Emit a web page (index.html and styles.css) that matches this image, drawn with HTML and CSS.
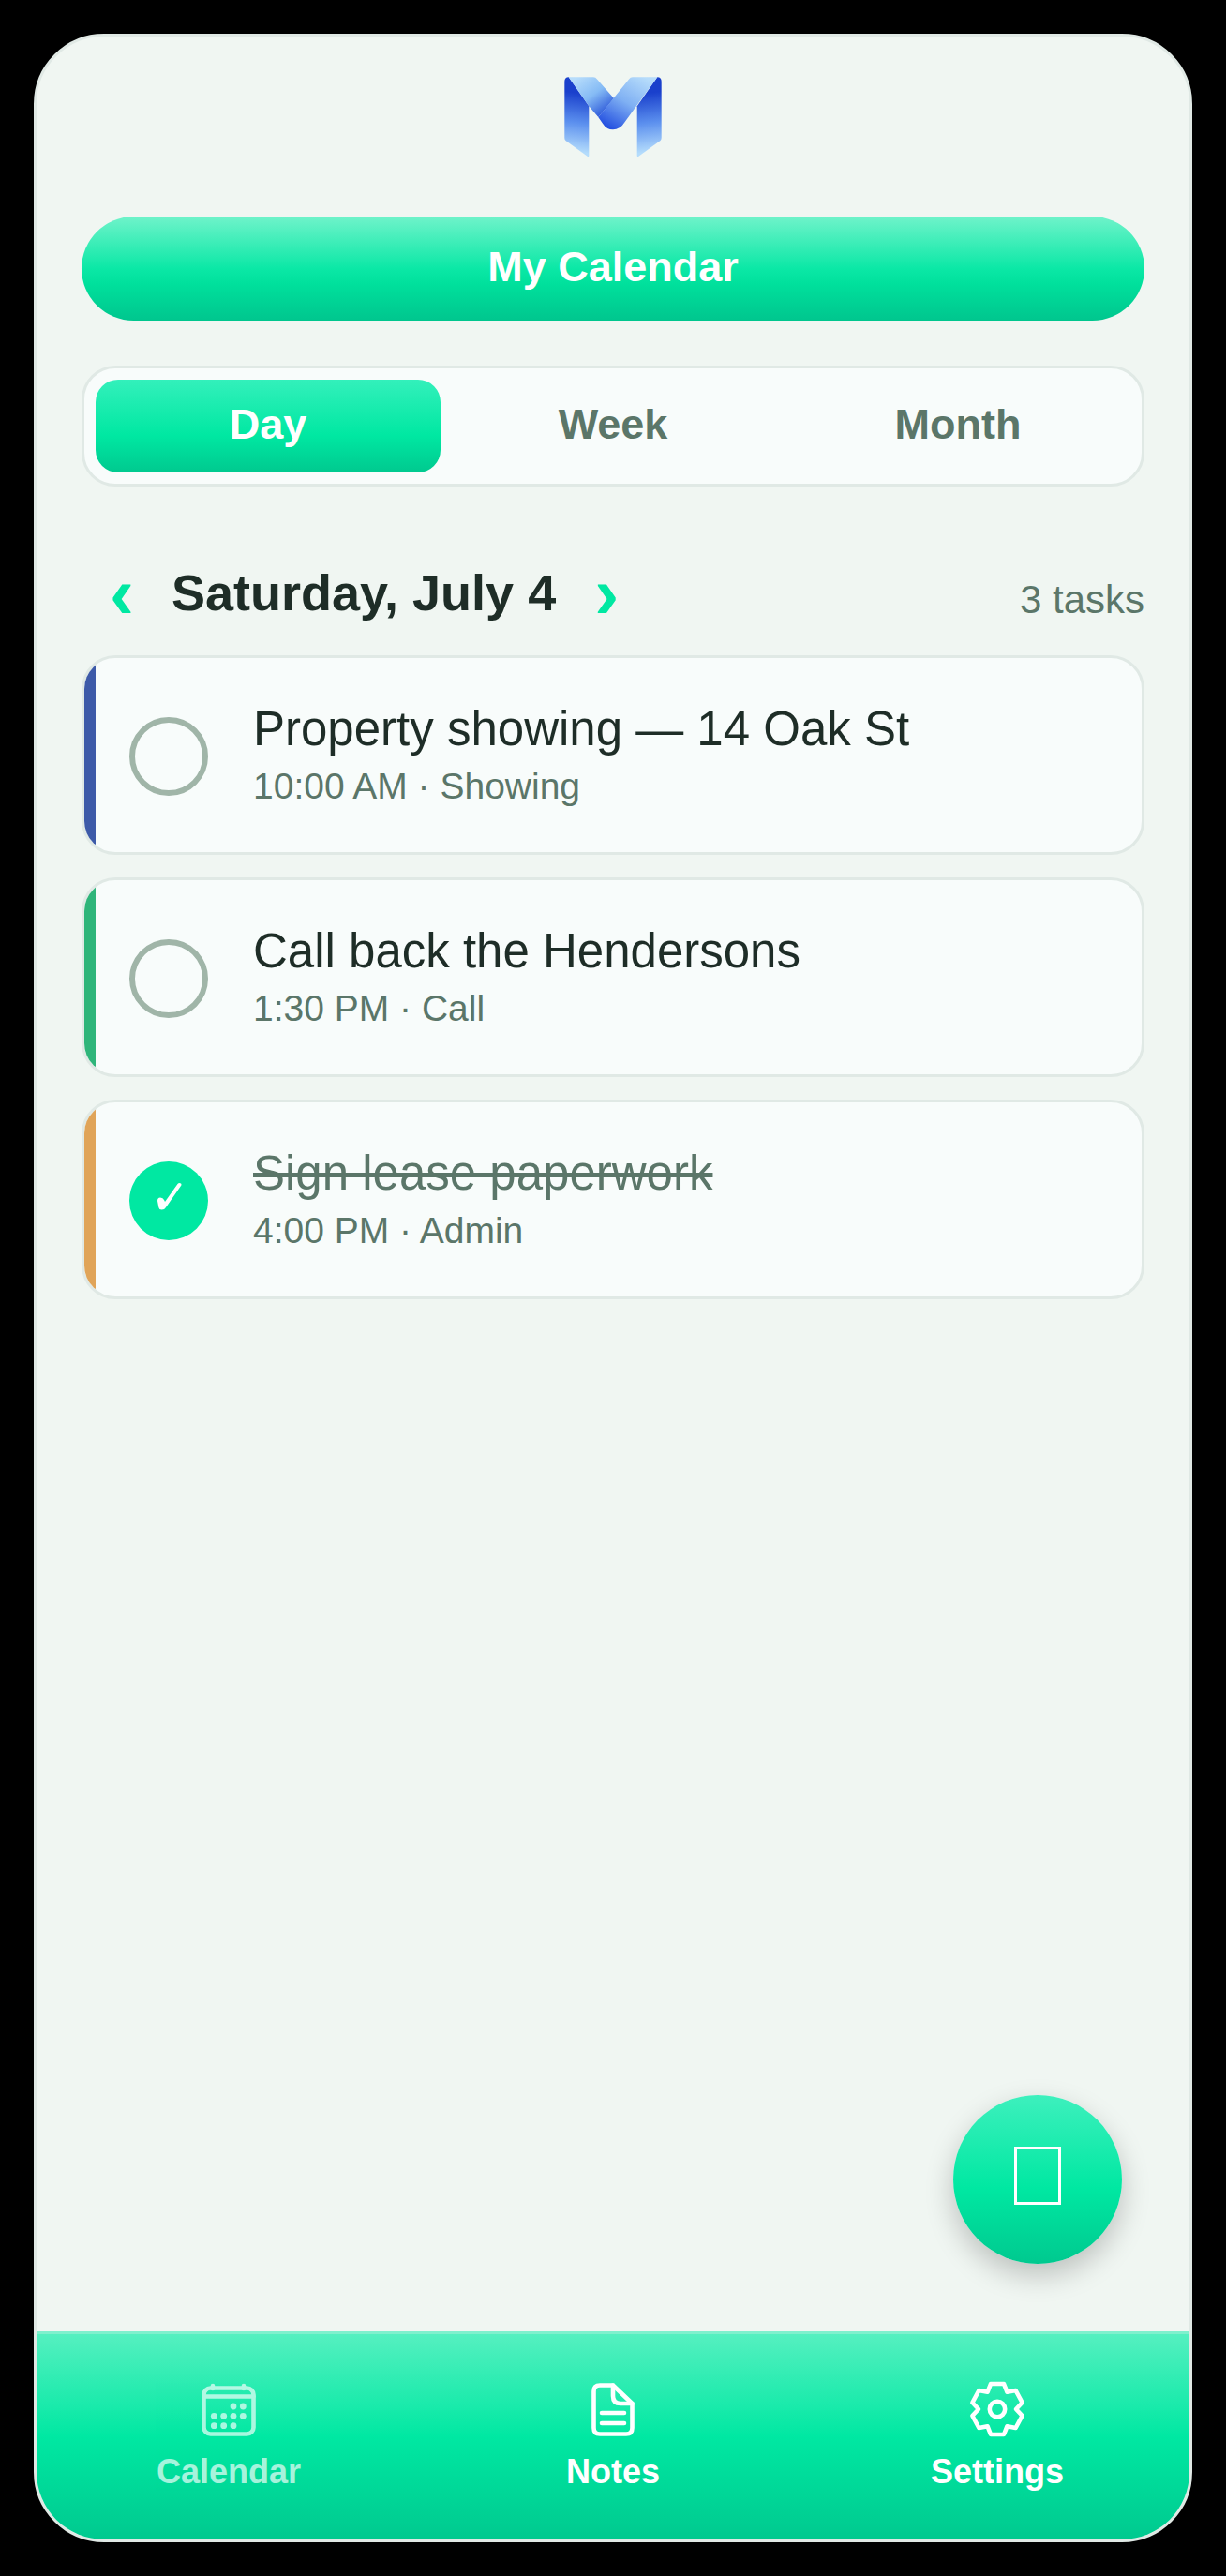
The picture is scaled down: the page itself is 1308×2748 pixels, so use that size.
FILE: index.html
```html
<!DOCTYPE html>
<html lang="en">
<head>
    <meta charset="UTF-8">
    <meta name="viewport" content="width=device-width, initial-scale=1.0">
    <title>My Calendar</title>
    <link rel="stylesheet" href="styles.css">
</head>
<body>
    <div class="phone">
        <main class="content">
            <!-- Logo -->
            <div class="logo-row">
                <svg class="logo" viewBox="0 0 104 86">
                    <defs>
                        <linearGradient id="sideGrad" gradientUnits="userSpaceOnUse" x1="20" y1="18" x2="12" y2="80">
                            <stop offset="0" stop-color="#1a40cc"/>
                            <stop offset="0.5" stop-color="#5b8fee"/>
                            <stop offset="1" stop-color="#b4dcfc"/>
                        </linearGradient>
                        <linearGradient id="sideGradR" gradientUnits="userSpaceOnUse" x1="84" y1="18" x2="92" y2="80">
                            <stop offset="0" stop-color="#1a40cc"/>
                            <stop offset="0.5" stop-color="#5b8fee"/>
                            <stop offset="1" stop-color="#b4dcfc"/>
                        </linearGradient>
                        <linearGradient id="backGrad" gradientUnits="userSpaceOnUse" x1="15" y1="0" x2="44" y2="40">
                            <stop offset="0" stop-color="#b6dcfb"/>
                            <stop offset="0.5" stop-color="#85bbf5"/>
                            <stop offset="1" stop-color="#2a55d8"/>
                        </linearGradient>
                        <linearGradient id="frontGrad" gradientUnits="userSpaceOnUse" x1="85" y1="0" x2="50" y2="56">
                            <stop offset="0" stop-color="#b6dcfb"/>
                            <stop offset="0.5" stop-color="#7fb0f3"/>
                            <stop offset="1" stop-color="#2450e0"/>
                        </linearGradient>
                    </defs>
                    <path fill="url(#sideGrad)" d="M0.3 5 Q0.3 0.3 4.7 0.3 L26.3 31.3 V84 Q26.3 85.6 25 85 L1.5 68 Q0.3 67 0.3 65 Z"/>
                    <path fill="url(#sideGradR)" d="M103.7 5 Q103.7 0.3 99.3 0.3 L77.7 31.3 V84 Q77.7 85.6 79 85 L102.5 68 Q103.7 67 103.7 65 Z"/>
                    <path fill="url(#backGrad)" d="M4.7 0.3 H31 Q33.5 0.3 35 2.5 L53 23 L36.3 43 L26.3 31.3 Z"/>
                    <path fill="url(#frontGrad)" d="M73 0.3 H99.3 L64 49 Q59.5 56.3 52 56.3 Q45 56.3 41 49.7 L36.3 43 L69 2.5 Q70.5 0.3 73 0.3 Z"/>
                </svg>
            </div>

            <!-- Titel -->
            <div class="title-bar">My Calendar</div>

            <!-- Ansicht -->
            <div class="segment">
                <div class="segment-item active">Day</div>
                <div class="segment-item">Week</div>
                <div class="segment-item">Month</div>
            </div>

            <!-- Datum -->
            <div class="date-row">
                <div class="date-nav">
                    <span class="chevron">‹</span>
                    <h2 class="date-label">Saturday, July 4</h2>
                    <span class="chevron">›</span>
                </div>
                <span class="task-count">3 tasks</span>
            </div>

            <!-- Aufgaben -->
            <div class="task-list">
                <div class="task-card">
                    <div class="task-accent accent-blue"></div>
                    <div class="task-check"></div>
                    <div class="task-text">
                        <div class="task-title">Property showing — 14 Oak St</div>
                        <div class="task-meta">10:00 AM · Showing</div>
                    </div>
                </div>
                <div class="task-card">
                    <div class="task-accent accent-green"></div>
                    <div class="task-check"></div>
                    <div class="task-text">
                        <div class="task-title">Call back the Hendersons</div>
                        <div class="task-meta">1:30 PM · Call</div>
                    </div>
                </div>
                <div class="task-card">
                    <div class="task-accent accent-orange"></div>
                    <div class="task-check done">
                        <svg class="check-mark" viewBox="0 0 84 84">
                            <path d="M51.5 24 Q53 22.5 55 23.5 Q56 24.5 55 26 L39 49 Q37.5 51.5 34.5 51.5 Q31.8 51.5 31.3 49 L30 42 Q30 38.5 33 38.5 Q36 38.5 37 41 L38 43 Z"/>
                        </svg>
                    </div>
                    <div class="task-text">
                        <div class="task-title striked">Sign lease paperwork</div>
                        <div class="task-meta">4:00 PM · Admin</div>
                    </div>
                </div>
            </div>

            <!-- Neu -->
            <button type="button" class="fab"><span class="fab-box"></span></button>
        </main>

        <!-- Navigation -->
        <nav class="bottom-nav">
            <div class="nav-item dim">
                <svg class="nav-icon" viewBox="0 0 64 64">
                    <rect x="5.5" y="9.5" width="53" height="49" rx="7"/>
                    <path d="M5.5 18.5 H58.5 M15 7 V10 M48 7 V10"/>
                    <g class="dots">
                        <circle cx="37" cy="29" r="3.4"/><circle cx="47.3" cy="29" r="3.4"/>
                        <circle cx="16.3" cy="39.3" r="3.4"/><circle cx="26.7" cy="39.3" r="3.4"/><circle cx="37" cy="39.3" r="3.4"/><circle cx="47.3" cy="39.3" r="3.4"/>
                        <circle cx="16.3" cy="49.7" r="3.4"/><circle cx="26.7" cy="49.7" r="3.4"/><circle cx="37" cy="49.7" r="3.4"/>
                    </g>
                </svg>
                <span class="nav-label">Calendar</span>
            </div>
            <div class="nav-item">
                <svg class="nav-icon" viewBox="0 0 64 64">
                    <path d="M18 6.5 H32 L52.5 26 V52 Q52.5 58.5 46 58.5 H18 Q11.5 58.5 11.5 52 V13 Q11.5 6.5 18 6.5 Z"/>
                    <path d="M32 6.5 V18 Q32 26 40 26 H52.5"/>
                    <path d="M20 36 H44 M20 47 H44"/>
                </svg>
                <span class="nav-label">Notes</span>
            </div>
            <div class="nav-item">
                <svg class="nav-icon" viewBox="0 0 64 64">
                    <path d="M25 5 H39 L42.5 13.8 L51.6 12 L58.6 25 L52 32 L58.6 39 L51.6 52 L42.5 50.2 L39 59 H25 L21.5 50.2 L12.4 52 L5.4 39 L12 32 L5.4 25 L12.4 12 L21.5 13.8 Z"/>
                    <circle cx="32" cy="32" r="8.2"/>
                </svg>
                <span class="nav-label">Settings</span>
            </div>
        </nav>
    </div>
</body>
</html>
```

FILE: styles.css
```css
* {
    margin: 0;
    padding: 0;
    box-sizing: border-box;
}

body {
    font-family: "Liberation Sans", Arial, sans-serif;
    background-color: #000;
    padding: 36px;
    width: 1308px;
    height: 2748px;
    overflow: hidden;
}

.phone {
    width: 1236px;
    height: 2676px;
    display: flex;
    flex-direction: column;
    background-color: #f0f6f2;
    border: 3px solid #e0e9e5;
    border-radius: 75px;
    overflow: hidden;
}

.content {
    position: relative;
    flex: 1;
    padding: 43px 48px 0;
}

.logo-row {
    display: flex;
    justify-content: center;
    height: 86px;
}

.logo {
    width: 104px;
    height: 86px;
}

.title-bar {
    margin-top: 63px;
    height: 111px;
    padding-bottom: 3px;
    border-radius: 56px;
    background: linear-gradient(180deg, #6ff3ca 0%, #0be8a6 50%, #00e09c 65%, #00c68e 100%);
    color: white;
    font-size: 45px;
    font-weight: bold;
    display: flex;
    align-items: center;
    justify-content: center;
}

.segment {
    margin-top: 48px;
    display: grid;
    grid-template-columns: repeat(3, 1fr);
    padding: 12px;
    background-color: #f8fcfb;
    border: 3px solid #e0e9e5;
    border-radius: 36px;
}

.segment-item {
    height: 99px;
    padding-bottom: 3px;
    display: flex;
    align-items: center;
    justify-content: center;
    font-size: 45px;
    font-weight: bold;
    color: #5b7669;
    border-radius: 24px;
}

.segment-item.active {
    color: white;
    background: linear-gradient(180deg, #33f0bb 0%, #00e8a2 60%, #00c98f 100%);
}

.date-row {
    margin-top: 80px;
    height: 100px;
    display: flex;
    align-items: flex-start;
    justify-content: space-between;
}

.date-nav {
    display: flex;
    align-items: center;
    height: 66px;
}

.chevron {
    color: #00e8a2;
    font-size: 78px;
    font-weight: bold;
    line-height: 66px;
    width: 28px;
    margin-left: 29px;
    margin-right: 39px;
    text-align: center;
}

.chevron:last-child {
    margin-left: 40px;
    margin-right: 0;
}

.date-label {
    color: #1e2d27;
    font-size: 54px;
    font-weight: bold;
    white-space: nowrap;
}

.task-count {
    color: #5b7669;
    font-size: 42px;
    margin-top: 17px;
}

.task-list {
    display: flex;
    flex-direction: column;
    gap: 24px;
}

.task-card {
    height: 213px;
    display: flex;
    align-items: center;
    background-color: #f8fcfb;
    border: 3px solid #e0e9e5;
    border-radius: 36px;
    overflow: hidden;
}

.task-accent {
    width: 12px;
    height: 100%;
}

.accent-blue {
    background-color: #3d5aa8;
}

.accent-green {
    background-color: #2fb57a;
}

.accent-orange {
    background-color: #e0a458;
}

.task-check {
    width: 84px;
    height: 84px;
    margin-top: 3px;
    margin-left: 36px;
    margin-right: 48px;
    border: 6px solid #a0b5a8;
    border-radius: 50%;
    flex-shrink: 0;
}

.task-check.done {
    background-color: #00e8a2;
    border: none;
}

.check-mark {
    display: block;
    width: 84px;
    height: 84px;
    fill: white;
}

.task-text {
    padding-bottom: 2px;
}

.task-title {
    color: #1e2d27;
    font-size: 51px;
    line-height: 59px;
}

.task-title.striked {
    color: #5b7669;
    text-decoration: line-through;
}

.task-meta {
    color: #5b7669;
    font-size: 39px;
    line-height: 45px;
    margin-top: 9px;
}

.fab {
    position: absolute;
    right: 72px;
    bottom: 72px;
    width: 180px;
    height: 180px;
    padding-bottom: 8px;
    border: none;
    border-radius: 50%;
    background: linear-gradient(180deg, #3df0bd 0%, #00e8a2 55%, #00c98f 100%);
    box-shadow: 0 12px 30px rgba(0, 0, 0, 0.22);
    display: flex;
    align-items: center;
    justify-content: center;
}

.fab-box {
    width: 50px;
    height: 62px;
    border: 3.5px solid white;
}

.bottom-nav {
    height: 222px;
    flex-shrink: 0;
    display: grid;
    grid-template-columns: repeat(3, 1fr);
    padding-top: 48px;
    background: linear-gradient(180deg, #55f0c0 0%, #00e8a2 50%, #00c98f 100%);
    border-top: 3px solid #7ff0cd;
}

.nav-item {
    display: flex;
    flex-direction: column;
    align-items: center;
    color: white;
}

.nav-item.dim {
    opacity: 0.65;
}

.nav-icon {
    width: 64px;
    height: 64px;
    fill: none;
    stroke: currentColor;
    stroke-width: 4.6;
    stroke-linecap: round;
    stroke-linejoin: round;
}

.dots {
    fill: currentColor;
    stroke: none;
}

.nav-label {
    font-size: 36px;
    font-weight: bold;
    margin-top: 14px;
}
```
